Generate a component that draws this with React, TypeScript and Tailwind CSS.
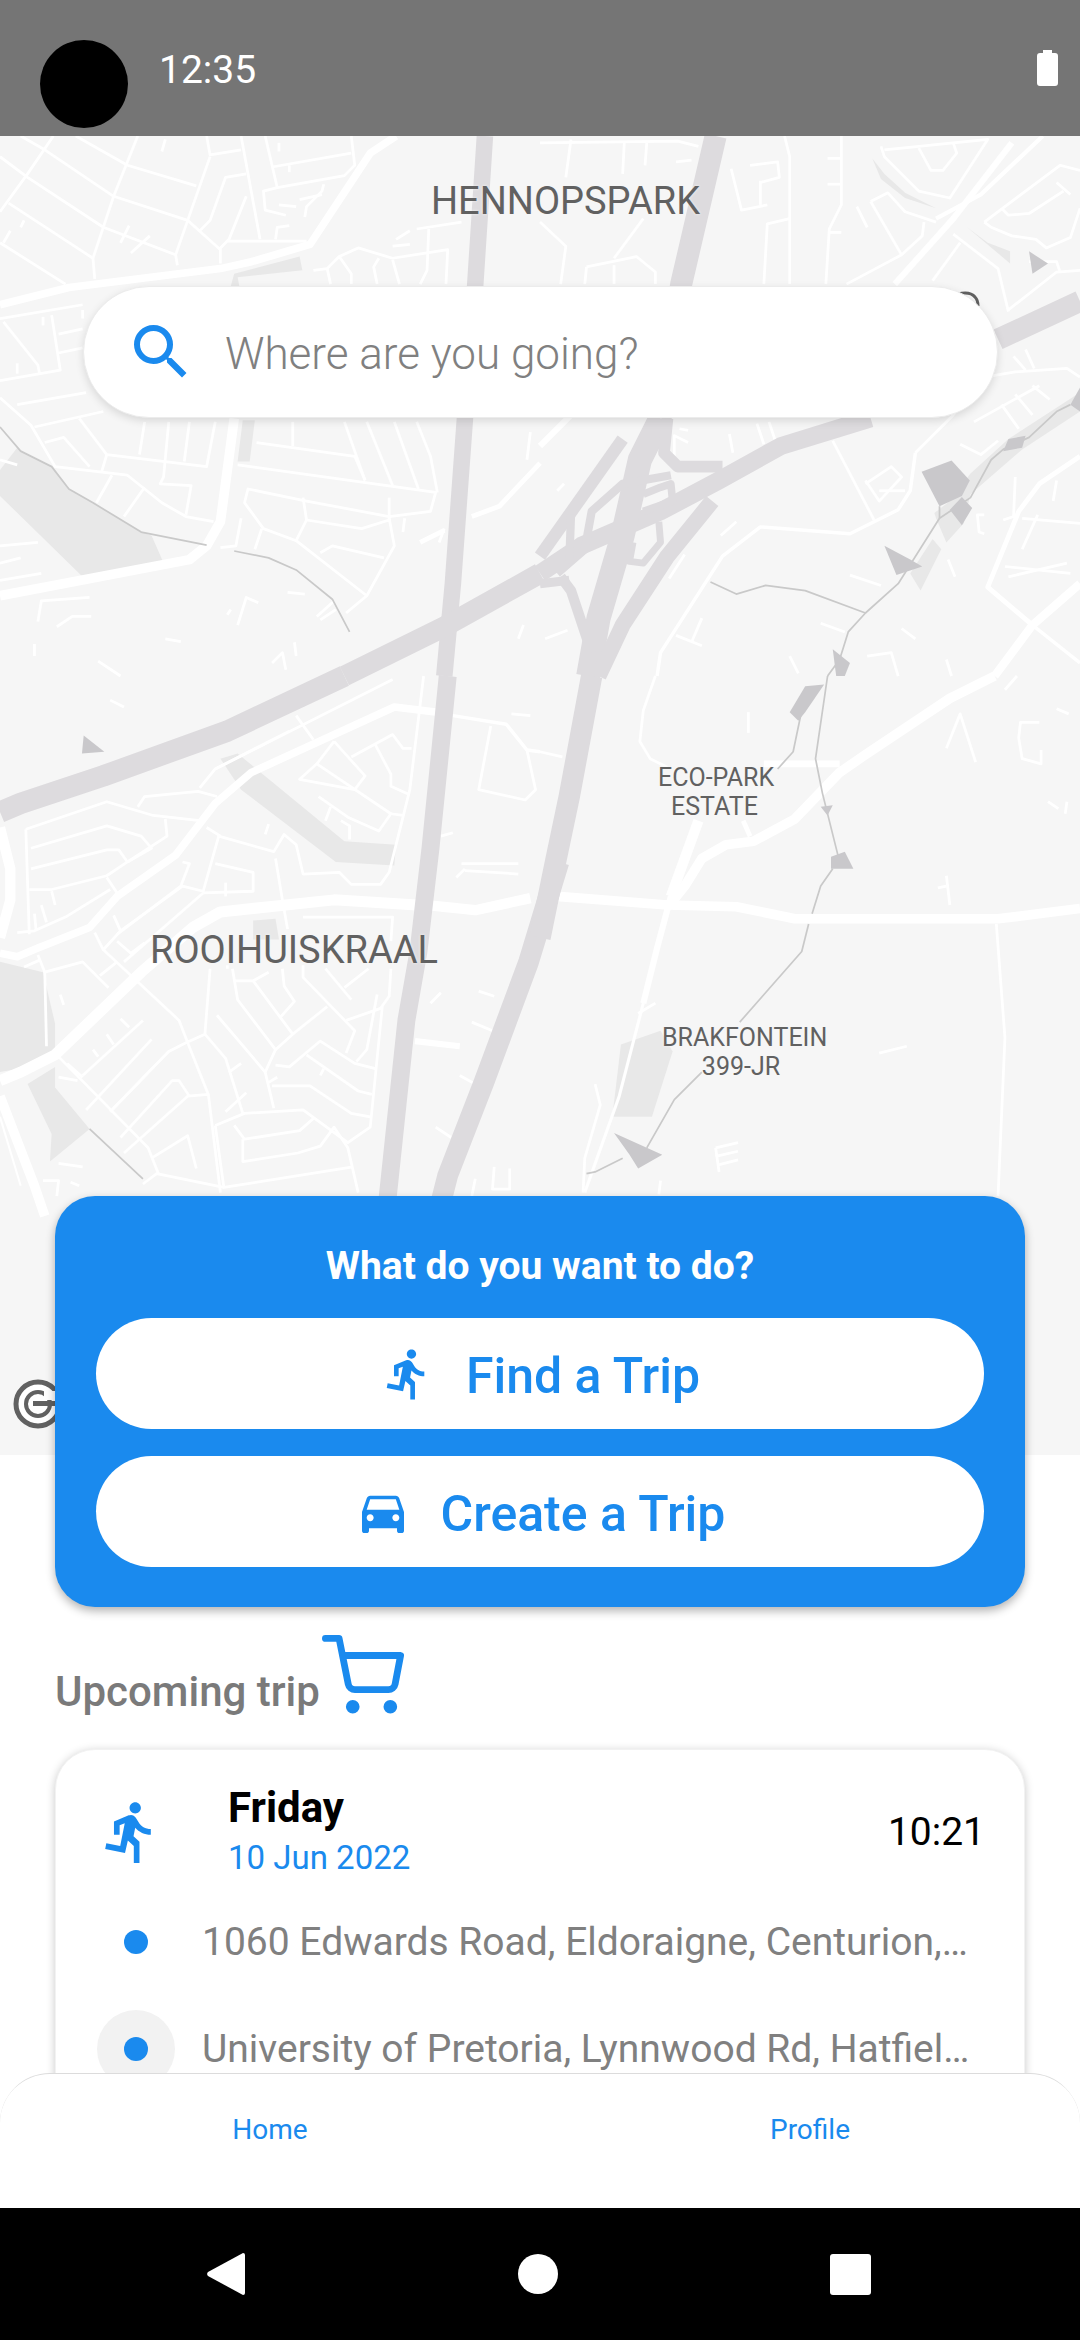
import {FiShoppingCart} from 'react-icons/fi';
import {MdDirectionsCar, MdDirectionsRun, MdSearch} from 'react-icons/md';

type Stroke = [number, string];

type Tile = {
  x: number;
  y: number;
  parks?: string[];
  water?: string[];
  thin: string[];
  wide: Stroke[];
  highway?: Stroke[];
  dark?: string[];
};

// Map traced tile by tile, points are in the tile's own 1568 unit grid
const TILES: Tile[] = [
  {
    x: 0,
    y: 136,
    parks: [
      '50,905 0,970 0,1045 240,1280 475,1240 440,1160 410,1150 270,1065 200,1025 150,960 70,920',
      '680,400 870,350 878,390 690,410 695,436 670,436',
      '690,945 725,945 740,825 705,825',
    ],
    water: [
      '0,845 60,915 150,960 200,1025 270,1065 410,1150 600,1188',
      '680,1205 780,1225 860,1260 965,1345 1015,1440',
    ],
    thin: [
      '220,0 370,85 570,145',
      '60,0 130,40 330,175 545,245 640,330 640,370',
      '0,60 80,120 300,265 510,345',
      '25,195 270,355',
      '0,310 190,430',
      '155,0 80,110 0,220',
      '400,0 330,175 270,355 275,415',
      '610,60 545,245 510,345 515,375',
      '600,0 610,55 700,40',
      '700,0 755,300',
      '770,0 805,150 1000,115 1030,85 1020,0',
      '790,90 1020,50',
      '715,110 655,120 610,245 580,275',
      '715,175 665,300 640,325 660,305 890,305',
      '805,150 765,160 770,215 830,230',
      '940,140 935,160 890,205 885,235',
      '480,10 470,45',
      '810,20 810,45',
      '840,85 840,105',
      '810,200 860,205',
      '870,185 935,170',
      '800,300 805,265 840,260',
      '30,275 10,310',
      '70,245 60,265',
      '375,260 350,310',
      '435,290 380,340',
      '10,540 110,665 115,690',
      '150,520 175,680 0,710',
      '170,575 240,560',
      '170,630 240,615',
      '50,780 250,745',
      '0,530 240,490',
      '125,525 125,550',
      '240,505 240,530',
      '50,660 50,690',
      '0,760 90,840 160,960 370,985 470,1065 540,1105 620,1120',
      '100,845 300,800',
      '230,820 310,925 600,960 625,830',
      '130,890 185,875 260,960',
      '420,830 405,925',
      '490,830 475,990 465,1010 555,1015 540,1100',
      '550,830 535,945',
      '310,925 295,975',
      '325,985 280,1065',
      '420,1020 360,1105',
      '690,955 1265,1035 1250,1090 1130,1105 890,1060 720,1025 710,1065 765,1140 860,1175 1065,1335 1145,1190 1130,1110',
      '745,890 1030,930 1060,1000',
      '1000,830 1060,1000',
      '1065,830 1140,1015',
      '1145,830 1215,1025',
      '1210,830 1250,930 1270,1035',
      '850,830 850,900',
      '890,1115 1050,1140 1130,1115',
      '880,1050 890,1115 860,1175',
      '760,1140 740,1200',
      '700,1110 685,1190 640,1195',
      '930,1210 965,1190 1115,1225',
      '1065,1335 1005,1385',
      '1130,1050 1130,1120',
      '910,390 950,385 985,350 1040,325 1140,355 1300,330 1295,430',
      '1140,360 1160,430',
      '985,350 1020,400 1020,430',
      '1100,355 1085,380 1095,430',
      '950,385 960,430',
      '1245,270 1240,390 1220,430',
      '1150,300 1190,275',
      '1210,270 1340,250',
      '1140,320 1190,315',
      '110,1410 120,1350 260,1340',
      '165,1425 210,1395 265,1395',
      '690,1420 715,1340 750,1355',
      '835,1325 885,1330',
      '480,1460 525,1468',
      '100,1475 100,1510',
      '660,1390 670,1375',
      '920,1395 970,1350',
      '930,1405 975,1375',
      '1505,1460 1520,1420',
      '285,1525 350,1568',
      '855,1470 860,1510',
      '0,940 50,955',
      '790,1530 820,1500 830,1550',
      '0,1190 110,1180',
      '0,1240 60,1225',
      '0,1290 120,1270',
      '1290,1140 1275,1180',
      '1175,1110 1170,1150',
      '1530,940 1540,860',
    ],
    wide: [
      [22, '1150,0 1075,50 900,315 730,365 640,385 200,440 0,490'],
      [28, '680,820 640,1120 600,1190 550,1230 0,1335'],
      [14, '1568,950 1450,1075 1370,1105'],
      [14, '1290,1145 1220,1180'],
    ],
    highway: [
      [48, '1408,0 1380,430 1350,820 1315,1300 1290,1568'],
      [60, '1568,1270 1290,1425 1000,1568'],
    ],
  },
  {
    x: 540,
    y: 136,
    parks: [
      '1250,980 1360,880 1560,750 1568,800 1400,910 1250,1040 1230,1125 1180,1180 1150,1110 1145,1095 1190,1060',
      '1140,1170 1165,1200 1105,1320 1075,1270',
      '965,65 990,125 1060,180 1150,210 1060,165 1000,110',
      '1240,265 1365,370 1365,335 1300,310',
    ],
    water: [
      '1540,780 1500,800 1420,875 1345,910 1310,940 1250,1050 1160,1110 1040,1300 945,1385 895,1440 870,1520 835,1568',
      '1160,1075 1160,1110',
      '495,1295 570,1330 655,1305 770,1320 945,1385',
    ],
    thin: [
      '0,20 400,15 460,30',
      '90,10 75,120',
      '245,15 240,110',
      '310,20 305,85',
      '395,75 440,70',
      '555,95 585,215 660,200',
      '640,130 640,200',
      '640,135 695,120 690,75 610,85',
      '710,0 725,60 725,430',
      '725,240 660,255 650,430',
      '875,0 875,200 840,270 830,430',
      '840,280 875,280',
      '835,65 875,65',
      '835,140 875,140',
      '300,240 215,355',
      '215,375 215,430',
      '135,380 280,350 335,395 335,430',
      '135,380 130,430',
      '0,250 75,320 60,430',
      '1000,40 1300,10 1190,180 1100,160 1000,60 990,30',
      '1100,35 1135,100 1170,100 1210,50 1200,20',
      '960,190 1010,165 1060,220 1150,250',
      '960,190 1050,345',
      '1115,250 1110,290 1050,345 890,430',
      '1290,250 1510,85 1568,100',
      '1290,250 1310,265 1370,290 1440,300 1470,325 1540,295 1568,210',
      '1340,210 1360,230 1420,225 1520,160',
      '1500,135 1540,170',
      '1200,285 1330,385 1360,510',
      '1220,310 1140,420',
      '1360,505 1500,395 1568,390',
      '1420,365 1500,365 1510,395',
      '850,885 970,1115',
      '525,1160 570,1120',
      '375,1285 420,1215',
      '15,1460 80,1435',
      '50,1030 70,1010',
      '405,850 430,855',
      '390,930 390,870 430,890',
      '550,865 560,920',
      '630,835 650,895',
      '665,830 685,890',
      '900,1275 990,1305',
      '1185,1230 1205,1280',
      '1050,1430 1090,1460',
      '815,1415 885,1440',
      '1220,895 1280,925 1330,885',
      '1375,640 1410,680',
      '1410,620 1435,675',
      '1260,830 1450,725',
      '1340,780 1390,850',
      '1380,750 1430,810',
      '1430,725 1480,765',
      '945,1010 1020,960 1050,990 985,1060 945,1000',
      '985,1030 1060,1030',
      '1350,1250 1540,1270',
      '1360,1280 1530,1240',
      '1445,1100 1400,1200',
      '1400,1110 1568,1125',
      '1290,1100 1270,1100 1275,1150 1290,1155',
      '1500,1000 1490,1060',
      '1380,990 1375,1105 1345,1115',
      '920,205 950,265',
      '395,1450 470,1480',
      '470,1400 440,1470',
      '950,1510 1020,1500 1040,1568',
      '1180,1520 1195,1568',
      '725,1510 750,1560',
    ],
    wide: [
      [18, '1370,20 1200,240 1030,430'],
      [12, '1460,0 1280,170 1150,240'],
      [10, '1090,920 1075,1030 1040,1085 900,1155 640,1135 530,1220 350,1500 340,1568'],
      [8, '1090,920 1200,810 1290,700 1380,685 1530,675 1568,700'],
      [14, '1568,930 1450,1010 1390,1090 1300,1310 1430,1420'],
      [24, '1568,1300 1430,1420 1320,1568'],
      [10, '1430,1420 1568,1530'],
      [18, '0,900 110,790'],
    ],
    highway: [
      [64, '510,0 410,430 350,820'],
      [62, '1568,480 1330,590'],
      [52, '960,820 700,900 520,1000 350,1090 120,1190 0,1270'],
      [70, '350,820 290,940 240,1160 170,1400 140,1568'],
      [36, '240,880 0,1220'],
      [46, '500,1060 370,1220 240,1420 170,1568'],
      [34, '530,960 400,960 360,920 370,820'],
      [24, '380,985 240,1010 150,1090 130,1200 50,1270'],
      [24, '90,1100 85,1240'],
      [22, '300,1040 350,1020 380,1010 385,1060 300,1090'],
      [20, '345,1120 350,1180 300,1240 260,1235 270,1180'],
      [30, '60,1280 90,1320 150,1500'],
      [26, '0,1300 85,1290'],
    ],
    dark: [
      '1108,975 1195,942 1248,1000 1225,1045 1160,1075',
      '1190,1085 1225,1048 1255,1080 1225,1130',
      '1000,1190 1075,1230 1110,1250 1035,1275',
      '1360,880 1410,870 1400,905 1345,915',
      '850,1490 900,1530 885,1568 860,1568',
      '1568,730 1540,780 1568,800',
      '1420,335 1475,370 1430,400',
    ],
  },
  {
    x: 0,
    y: 676,
    parks: [
      '0,830 125,860 160,1010 160,1090 60,1140 0,1150',
      '80,1185 160,1135 160,1195 260,1315 145,1410 150,1330',
      '735,710 800,705 810,765 735,765',
      '640,240 690,225 1000,480 1150,490 1145,550 975,540 700,330',
    ],
    water: ['260,1315 415,1460'],
    thin: [
      '75,445 310,365 445,405 580,420',
      '400,380 420,350 575,335 630,350',
      '580,325 625,270 840,160',
      '625,270 1140,10',
      '860,115 910,185',
      '1230,0 1190,330 1130,570 1105,605 1020,605 985,570 880,575 860,490 825,460 795,510 635,465 590,625 530,610 350,740',
      '75,445 85,750',
      '90,500 310,435 410,465 440,500 370,540 310,580 150,620 85,620',
      '90,560 310,505 345,505 370,540',
      '310,585 340,630',
      '480,415 485,465 370,540',
      '320,620 190,700 100,740 50,745',
      '100,690 105,740',
      '120,665 135,715',
      '150,625 160,665',
      '600,440 640,465',
      '800,530 820,650 835,735',
      '625,545 735,570 735,625 590,630',
      '655,600 655,640',
      '590,630 360,830',
      '530,540 550,545 525,610 340,750',
      '970,190 1060,290 1030,330 870,300 920,255 970,190',
      '920,255 1135,400 1100,450 1010,410 925,350',
      '1020,235 1140,170 1170,210 1195,210',
      '1090,200 1135,285 1135,320 1190,345',
      '1135,400 1170,405',
      '945,420 960,380',
      '990,420 1015,435 1015,475',
      '1425,145 1390,330 1525,360 1555,330 1530,215',
      '1340,545 1505,545',
      '1350,565 1505,575',
      '1325,585 1350,560',
      '110,810 130,860 240,830 315,905',
      '130,860 135,1075',
      '290,870 340,830',
      '275,745 300,795 520,1000 545,1065 605,1215 640,1500',
      '300,795 350,740 330,695',
      '340,770 380,805 420,775',
      '880,700 1140,700 1135,770',
      '610,850 595,1040 540,1065 490,1090 320,1265',
      '595,1040 655,1110 705,1270',
      '630,985 770,1150 795,1255',
      '675,850 690,940 800,1085 770,1150',
      '735,885 850,1040 800,1085',
      '680,885 735,885 780,860',
      '820,850 825,900 855,945 815,990',
      '880,840 880,875 1030,1030 1005,1095',
      '950,960 850,1040',
      '945,850 1020,940',
      '1000,905 1070,850',
      '1135,850 1130,930 1105,965 1005,1000',
      '1110,960 1075,1310 1010,1355 880,1260 710,1270 625,1305',
      '1095,925 1065,1085 1035,1120',
      '800,1130 840,1135 930,1060 1030,1125 1090,1140',
      '890,1100 1040,1205 1080,1215',
      '790,1190 900,1190 1020,1270 1075,1280',
      '680,1305 710,1345 870,1320 910,1285',
      '705,1345 705,1410 865,1385 930,1365 970,1310 1010,1370 1040,1500',
      '1025,1425 650,1485 625,1305',
      '650,1485 455,1445 415,1475',
      '460,1445 430,1370 165,1100',
      '440,1400 545,1335 570,1430',
      '360,1385 545,1220 605,1215',
      '350,1340 500,1175 520,1175 550,1220',
      '240,1160 415,1000',
      '320,1265 490,1090',
      '250,1260 440,1055',
      '320,70 360,90',
      '1485,110 1540,115',
      '1280,465 1315,455',
      '780,430 770,460',
      '1390,915 1435,930',
      '1370,1005 1430,1030',
      '1335,1160 1380,1185',
      '1265,1310 1310,1340',
      '1250,950 1280,920',
      '1380,1460 1370,1510',
      '1435,1425 1430,1490 1480,1490 1480,1430',
      '170,1415 240,1425',
      '205,1470 230,1480',
      '175,925 185,955',
      '70,845 115,825',
      '125,1465 170,1465 165,1510',
      '195,1125 240,1165',
      '170,1165 225,1175',
      '310,1040 330,1070',
      '350,995 375,1020',
      '270,1085 285,1105',
      '665,1150 700,1125',
      '655,1265 715,1210',
      '780,1180 805,1165',
      '930,1160 940,1140',
      '660,840 660,850',
    ],
    wide: [
      [22, '1270,105 1145,90 730,280 625,370 510,520 340,640 260,730 110,790 50,815 0,805'],
      [10, '1315,115 1470,140 1530,215 1568,220'],
      [32, '1210,665 970,650 640,685 560,730 410,860 160,1100 60,1150 0,1175'],
      [30, '1240,665 1380,680 1540,645'],
      [30, '0,440 30,560 30,650 0,760'],
      [28, '0,1220 100,1480 130,1568'],
      [18, '1205,1060 1335,1075'],
      [6, '0,1280 60,1480'],
    ],
    highway: [
      [62, '1000,0 660,160 300,290 60,370 0,395'],
      [52, '1300,0 1250,500 1215,800 1180,1000 1120,1568'],
      [60, '1623,540 1535,830 1405,1180 1300,1450 1270,1568'],
    ],
    dark: ['243,173 303,220 238,225'],
  },
  {
    x: 540,
    y: 676,
    parks: ['235,1070 350,1030 385,1090 325,1280 210,1280'],
    water: [
      '835,0 800,240 820,340 865,520',
      '760,100 735,220 690,270',
      '850,560 815,610 790,690',
      '780,720 760,800 580,1005',
      '470,1150 390,1230 310,1370',
      '240,1400 160,1440 135,1445',
    ],
    thin: [
      '335,0 300,100 290,190 320,240 370,265',
      '0,220 65,235',
      '1325,720 1350,1050 1330,1510',
      '160,1185 175,1245 130,1400 125,1500',
      '285,980 335,950',
      '605,105 605,165',
      '1180,210 1220,110 1265,250',
      '1450,135 1395,135 1390,180 1400,240 1455,255 1455,215',
      '1500,95 1535,110',
      '1475,365 1505,385',
      '1530,365 1525,400',
      '1180,580 1190,665',
      '1155,615 1180,610',
      '985,1095 1065,1075',
      '510,1370 520,1440',
      '510,1370 575,1355',
      '510,1395 575,1380',
      '515,1420 575,1405',
      '350,1465 345,1505',
      '1350,40 1385,0',
    ],
    wide: [
      [28, '1320,0 1190,65 950,225 870,280 740,415 620,480 540,490 470,530 420,610 380,660'],
      [30, '460,420 380,640'],
      [18, '380,640 340,790 300,950'],
      [9, '300,950 230,1220 130,1500'],
      [28, '50,640 370,665 570,670 740,705 1330,705 1568,675'],
      [20, '650,255 870,255'],
      [14, '590,420 610,465'],
    ],
    highway: [[62, '150,0 85,350 45,540 0,760']],
    dark: [
      '770,30 825,25 770,105 750,130 725,105',
      '845,525 885,510 910,560 845,560',
      '815,380 850,375 835,405',
      '215,1327 310,1370 355,1390 285,1430 260,1390',
    ],
  },
];

function layer(draw: (tile: Tile) => React.ReactNode) {
  return TILES.map((tile) => (
    <g key={tile.x + '-' + tile.y} transform={`translate(${tile.x} ${tile.y}) scale(0.3444)`}>
      {draw(tile)}
    </g>
  ));
}

function Line({points, width, color}: {points: string; width: number; color: string}) {
  return (
    <polyline
      points={points}
      fill="none"
      stroke={color}
      strokeWidth={width}
      strokeLinejoin="round"
      strokeLinecap="butt"
    />
  );
}

function MapLayer() {
  return (
    <svg className="block h-[1319px] w-[1080px]" viewBox="0 136 1080 1319">
      <rect x="0" y="136" width="1080" height="1319" fill="#f6f6f6" />
      {layer((t) => t.parks?.map((p) => <polygon key={p} points={p} fill="#e8e8e8" />))}
      {layer((t) => t.thin.map((p, i) => <Line key={i} points={p} width={8} color="#ffffff" />))}
      {layer((t) => t.wide.map(([w, p], i) => <Line key={i} points={p} width={w} color="#ffffff" />))}
      {layer((t) => t.water?.map((p) => <Line key={p} points={p} width={5} color="#c9c9c9" />))}
      {layer((t) => t.highway?.map(([w, p], i) => <Line key={i} points={p} width={w} color="#dddbde" />))}
      {layer((t) => t.dark?.map((p) => <polygon key={p} points={p} fill="#c9c8cb" />))}
      {/* corner of a label that pokes out behind the search bar */}
      <path d="M958 294 q12 -3 17 3 q3 3 3 9" fill="none" stroke="#616161" strokeWidth="3" />
      {/* google logo, the card covers its right side */}
      <circle cx="38" cy="1404" r="22" fill="#ffffff" stroke="#616161" strokeWidth="5" />
      <circle cx="38" cy="1404" r="12" fill="none" stroke="#616161" strokeWidth="4" />
      <rect x="44" y="1391" width="12" height="9" fill="#ffffff" />
      <rect x="33" y="1401" width="24" height="5" fill="#616161" />
    </svg>
  );
}

function MapLabel({className, children}: {className: string; children: React.ReactNode}) {
  return (
    <div className={`absolute whitespace-nowrap text-center font-normal text-[#616161] [text-shadow:0_0_3px_#f6f6f6] ${className}`}>
      {children}
    </div>
  );
}

function TripButton({icon, label}: {icon: React.ReactNode; label: string}) {
  return (
    <button className="flex h-[111px] w-full items-center justify-center gap-[30px] rounded-full bg-white text-[50px] font-medium text-[#1a8aee]">
      {icon}
      <span className="pt-[5px]">{label}</span>
    </button>
  );
}

function Stop({label, active}: {label: string; active?: boolean}) {
  return (
    <div className="flex h-[78px] items-center gap-[27px]">
      <div className={`flex h-[78px] w-[78px] shrink-0 items-center justify-center rounded-full ${active ? 'bg-[#f2f2f2]' : ''}`}>
        <div className="h-[24px] w-[24px] rounded-full bg-[#1a8aee]" />
      </div>
      <div className="whitespace-nowrap text-[39px] leading-[46px] text-[#808080]">{label}</div>
    </div>
  );
}

export default function App() {
  return (
    <div className="flex h-[2340px] w-[1080px] flex-col overflow-hidden bg-white font-['Roboto',sans-serif]">
      {/* status bar */}
      <div className="flex h-[136px] shrink-0 items-start bg-[#757575] pl-[40px] pr-[22px] pt-[40px]">
        <div className="h-[88px] w-[88px] rounded-full bg-black" />
        <div className="ml-[31px] mt-[8px] text-[39px] leading-[44px] text-white">12:35</div>
        <svg className="ml-auto mt-[10px]" width="21" height="36" viewBox="0 0 21 36">
          <path d="M6 0h9v3h3a3 3 0 0 1 3 3v27a3 3 0 0 1-3 3H3a3 3 0 0 1-3-3V6a3 3 0 0 1 3-3h3z" fill="#ffffff" />
        </svg>
      </div>

      <div className="relative flex-1 overflow-hidden">
        <div className="relative h-[1319px]">
          <MapLayer />
          <MapLabel className="left-[431px] top-[47px] text-[38px] leading-[36px]">HENNOPSPARK</MapLabel>
          <MapLabel className="left-[150px] top-[796px] text-[38px] leading-[36px]">ROOIHUISKRAAL</MapLabel>
          <MapLabel className="left-[658px] top-[627px] w-[113px] text-[25px] leading-[29px]">
            ECO-PARK
            <br />
            ESTATE
          </MapLabel>
          <MapLabel className="left-[662px] top-[887px] w-[158px] text-[25px] leading-[29px]">
            BRAKFONTEIN
            <br />
            399-JR
          </MapLabel>

          <div className="absolute left-[83px] top-[150px] flex h-[132px] w-[915px] items-center rounded-full border border-[#ececec] bg-white pl-[41px] shadow-[0_3px_8px_rgba(0,0,0,0.12)]">
            <MdSearch size={72} color="#1a8aee" />
            <span className="ml-[28px] pt-[4px] text-[44px] font-light text-[#808080]">Where are you going?</span>
          </div>
        </div>

        {/* action card sits over the bottom of the map */}
        <div className="relative z-10 mx-[55px] -mt-[259px] flex h-[411px] flex-col gap-[27px] rounded-[40px] bg-[#1a8aee] px-[41px] pt-[45px] shadow-[0_4px_10px_rgba(0,0,0,0.3)]">
          <div className="text-center text-[39px] font-bold leading-[50px] text-white">What do you want to do?</div>
          <TripButton icon={<MdDirectionsRun size={56} />} label="Find a Trip" />
          <TripButton icon={<MdDirectionsCar size={56} />} label="Create a Trip" />
        </div>

        <div className="mx-[55px] mt-[28px] flex items-end gap-[2px]">
          <span className="text-[42px] font-medium leading-[50px] text-[#7a7a7a]">Upcoming trip</span>
          <FiShoppingCart size={82} color="#1a8aee" />
        </div>

        <div className="mx-[55px] mt-[32px] h-[420px] rounded-[40px] border border-[#f2f2f2] bg-white pl-[41px] pr-[39px] pt-[34px] shadow-[0_2px_10px_rgba(0,0,0,0.22)]">
          <div className="flex items-center">
            <MdDirectionsRun size={68} color="#1a8aee" />
            <div className="ml-[63px] flex flex-col gap-[5px]">
              <span className="text-[42px] font-bold leading-[48px] text-black">Friday</span>
              <span className="text-[33px] leading-[42px] text-[#1a8aee]">10 Jun 2022</span>
            </div>
            <span className="ml-auto text-[39px] leading-[44px] text-black">10:21</span>
          </div>
          <div className="mt-[24px] flex flex-col gap-[29px]">
            <Stop label="1060 Edwards Road, Eldoraigne, Centurion,…" />
            <Stop active label="University of Pretoria, Lynnwood Rd, Hatfiel…" />
          </div>
        </div>

        {/* tab bar floats over the scrolled list */}
        <div className="absolute bottom-0 left-0 z-20 grid h-[135px] w-[1080px] grid-cols-2 rounded-t-[50px] border-t border-[#dcdcdc] bg-white pt-[39px] text-center text-[28px] leading-[34px] text-[#1a8aee]">
          <span>Home</span>
          <span>Profile</span>
        </div>
      </div>

      {/* android nav */}
      <div className="flex h-[132px] shrink-0 items-center justify-between bg-black pl-[207px] pr-[209px]">
        <svg width="38" height="44" viewBox="0 0 38 44">
          <path d="M36 1 a2 2 0 0 1 2 2v38a2 2 0 0 1-2 2 L1 24 a3 3 0 0 1 0-4z" fill="#ffffff" />
        </svg>
        <div className="h-[40px] w-[40px] rounded-full bg-white" />
        <div className="h-[41px] w-[41px] rounded-[3px] bg-white" />
      </div>
    </div>
  );
}
